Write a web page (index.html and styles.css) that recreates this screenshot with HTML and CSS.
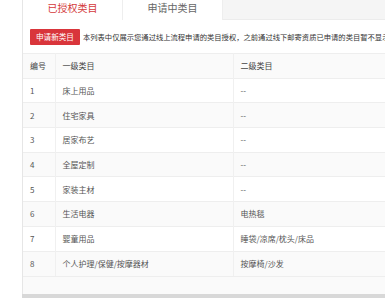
FILE: index.html
```html
<!DOCTYPE html>
<html lang="zh-CN">
<head>
  <meta charset="UTF-8">
  <title>类目管理</title>
  <link rel="stylesheet" href="styles.css">
</head>
<body>
  <div class="panel">
    <div class="tabs">
      <div class="tab active">已授权类目</div>
      <div class="tab">申请中类目</div>
      <div class="tab-rest"></div>
    </div>

    <div class="toolbar">
      <button class="btn btn-danger">申请新类目</button>
      <span class="notice">本列表中仅展示您通过线上流程申请的类目授权，之前通过线下邮寄资质已申请的类目暂不显示</span>
    </div>

    <table class="cat-table">
      <thead>
        <tr>
          <th class="col-no">编号</th>
          <th class="col-first">一级类目</th>
          <th>二级类目</th>
        </tr>
      </thead>
      <tbody>
        <tr><td>1</td><td>床上用品</td><td>--</td></tr>
        <tr><td>2</td><td>住宅家具</td><td>--</td></tr>
        <tr><td>3</td><td>居家布艺</td><td>--</td></tr>
        <tr><td>4</td><td>全屋定制</td><td>--</td></tr>
        <tr><td>5</td><td>家装主材</td><td>--</td></tr>
        <tr><td>6</td><td>生活电器</td><td>电热毯</td></tr>
        <tr><td>7</td><td>婴童用品</td><td>睡袋/凉席/枕头/床品</td></tr>
        <tr><td>8</td><td>个人护理/保健/按摩器材</td><td>按摩椅/沙发</td></tr>
      </tbody>
    </table>
    <div class="table-foot"></div>
  </div>
  <div class="scrollbar"></div>
</body>
</html>
```

FILE: styles.css
```css
* {
  margin: 0;
  padding: 0;
  box-sizing: border-box;
}

html, body {
  width: 385px;
  height: 298px;
  overflow: hidden;
}

body {
  position: relative;
  background: #fff;
  font-family: "Noto Sans CJK SC", "Noto Sans", sans-serif;
  color: #444;
}

.panel {
  margin-left: 22px;
  width: 640px;
  border-left: 1px solid #e6e6e6;
  background: #fff;
}

.tabs {
  display: flex;
  height: 20px;
  border-bottom: 1px solid #ececec;
}

.tab {
  width: 100px;
  height: 20px;
  line-height: 16px;
  text-align: center;
  font-size: 10px;
  color: #666;
  background: #fff;
  border-right: 1px solid #eee;
}

.tab.active {
  color: #d43a3a;
}

.tab-rest {
  flex: 1;
  background: #f5f5f5;
}

.toolbar {
  display: flex;
  align-items: center;
  gap: 3px;
  height: 33px;
  padding-left: 7px;
}

.btn {
  height: 16px;
  padding: 0 6px;
  border: none;
  border-radius: 1px;
  font-family: inherit;
  font-size: 7.6px;
  line-height: 16px;
}

.btn-danger {
  background: #d9353b;
  color: #fff;
}

.notice {
  font-size: 7.3px;
  color: #333;
  white-space: nowrap;
}

.cat-table {
  width: 100%;
  border-collapse: collapse;
  font-size: 8px;
}

.cat-table th,
.cat-table td {
  height: 24.7px;
  padding: 0 7px;
  text-align: left;
  font-weight: normal;
  border-top: 1px solid #eee;
  border-right: 1px solid #f0f0f0;
  color: #555;
}

.cat-table th {
  color: #444;
  background: #fafafa;
}

.col-no {
  width: 32px;
}

.col-first {
  width: 178px;
}

.cat-table tbody tr:nth-child(even) td {
  background: #fafafa;
}

.table-foot {
  height: 18px;
  border-top: 1px solid #eee;
  background: #fafafa;
}

.scrollbar {
  position: absolute;
  left: 22px;
  right: 0;
  bottom: 0;
  height: 4px;
  background: #d8d8d8;
}
```
